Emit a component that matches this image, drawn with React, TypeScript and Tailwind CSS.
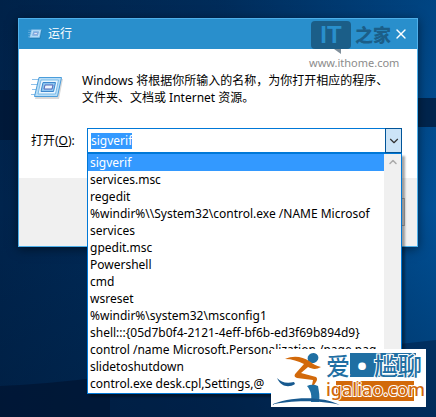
import React, { useEffect, useRef, useState } from "react";
import { ChevronDown, ChevronUp, X } from "lucide-react";

const HISTORY = [
  "sigverif",
  "services.msc",
  "regedit",
  "%windir%\\\\System32\\control.exe /NAME Microsof",
  "services",
  "gpedit.msc",
  "Powershell",
  "cmd",
  "wsreset",
  "%windir%\\system32\\msconfig1",
  "shell:::{05d7b0f4-2121-4eff-bf6b-ed3f69b894d9}",
  "control /name Microsoft.Personalization /page pag",
  "slidetoshutdown",
  "control.exe desk.cpl,Settings,@",
];

function RunIcon({ className }: { className: string }) {
  return (
    <svg viewBox="0 0 32 24" className={className} aria-hidden="true">
      <path d="M1 3.500h9M0 8.500h8M1 13.500h6M0 18.500h6" stroke="#8fc1ea" strokeWidth="1.2" />
      <path d="M8 3h24l-4 20H4z" fill="#000" opacity=".15" />
      <path d="M8 1.500h22.500l-4 19H3.500z" fill="#b9def7" stroke="#4a9ddb" />
      <path d="M10 4h17.500l-3 14H7z" fill="#e9f6ff" stroke="#7bbbe8" />
      <path d="M12 6.500h12.500l-2 9H10z" fill="#8cc6f0" stroke="#3d86cc" />
      <path d="M14 9h8l-1 4h-8z" fill="#eef6fd" stroke="#5566b8" />
    </svg>
  );
}

function Wallpaper() {
  return (
    <div className="absolute inset-0 bg-linear-to-r from-[#00244d] via-[#003062] to-[#005096]" aria-hidden="true">
      <div className="absolute inset-0 bg-linear-to-b from-[#001a38]/20 via-transparent to-[#001a38]/40" />
      <svg viewBox="0 0 436 417" preserveAspectRatio="none" className="absolute inset-0 size-full">
        <path d="M0 90h20v50H0z" fill="#00132c" opacity=".55" />
        <path d="M416 98h20v29h-20z" fill="#001b3d" opacity=".8" />
        <path d="M0 386q50-2 110-10v41H0z" fill="#001430" opacity=".7" />
        <path d="M110 376l326-36v77H110z" fill="#001b3d" opacity=".45" />
      </svg>
    </div>
  );
}

function SiteMark() {
  return (
    <div className="pointer-events-none absolute top-0.5 right-5 w-[88px]">
      <div className="flex items-center gap-1 pl-0.5 text-[#1b5e88]">
        <div className="relative flex h-7 w-10 items-center justify-center rounded-sm bg-[#1b5e88] font-['Liberation_Sans',sans-serif] text-2xl leading-none font-bold text-[#298fcc]">
          IT
          <svg viewBox="0 0 7 5" className="absolute top-full right-2.5 h-[5px] w-[7px]" aria-hidden="true">
            <path d="M0 0h7v5z" fill="#7f8f9b" />
          </svg>
        </div>
        <span className="text-lg leading-7 font-black">之家</span>
      </div>
      <p className="mt-1.5 text-[11px] leading-4 text-[#8c8c8c]">www.ithome.com</p>
    </div>
  );
}

function Sponsor() {
  return (
    <aside className="absolute right-2.5 bottom-2.5 z-20 flex h-[58px] w-[155px] bg-white">
      <svg viewBox="0 0 70 58" className="absolute bottom-0 left-0 h-[58px] w-[70px]" aria-hidden="true">
        <ellipse cx="42" cy="9" rx="5.500" ry="5" fill="#1f6fa3" transform="rotate(-25 42 9)" />
        <path d="M14 10c9-4 18-2 24 2 4 3 7 5 12 6-5 3-9 2-13 0l-7 6 15 4c2 2 1 4-2 8h-2l1-5-16-2c-3-1-3-3-1-5l8-9c-6-3-12-5-19-5z" fill="#d2690a" />
        <path d="M6 29c4 4 9 6 17 4l1 2c-6 4-14 3-18-6z" fill="#17598f" />
        <path d="M36 37c4-2 8-1 11 0 1 6 2 10 1 16h-8c1-7 0-11-4-16z" fill="#1f6fa3" />
        <path d="M0 56c16-8 50-10 69 0-20-5-50-5-69 0z" fill="#17598f" />
      </svg>
      <div className="relative ml-[55px] [paint-order:stroke_fill] [-webkit-text-stroke:2px_white]">
        <p className="mt-1 flex h-6 w-24 bg-[linear-gradient(to_right,transparent_24px,#1f6fa3_24px,#1f6fa3_90px,transparent_90px)] font-['Noto_Sans_CJK_SC',sans-serif] text-2xl leading-6 font-medium text-[#1f6fa3]">
          <span>爱</span>
          <span className="w-6 text-center text-white">·</span>
          <span>尴聊</span>
        </p>
        <p className="mt-1 h-5 bg-[linear-gradient(to_right,transparent_10px,#d2690a_10px,#d2690a_88px,transparent_88px)] text-lg leading-4 font-medium text-[#d2690a]">
          igaliao.com
        </p>
      </div>
    </aside>
  );
}

export default function App() {
  const [command, setCommand] = useState(HISTORY[0]);
  const [open, setOpen] = useState(true);
  const inputRef = useRef<HTMLInputElement>(null);

  useEffect(() => {
    inputRef.current?.focus();
    inputRef.current?.select();
  }, []);

  const handlePick = (item: string) => {
    setCommand(item);
    setOpen(false);
  };

  return (
    <main className="relative min-h-screen overflow-hidden p-[18px] font-['Noto_Sans','Noto_Sans_CJK_SC',sans-serif] text-xs text-black">
      <Wallpaper />

      <section className="relative border border-[#4fb0ea] bg-white shadow-[0_2px_10px_rgba(0,0,0,0.5)]">
        <header className="flex h-[30px] items-center gap-1.5 bg-[#298fcc] pr-2 pl-[9px] text-white">
          <RunIcon className="h-3 w-3.5" />
          <h1 className="flex-1">运行</h1>
          <button type="button" aria-label="关闭">
            <X className="size-4" strokeWidth={2} />
          </button>
        </header>
        <SiteMark />

        <div className="pt-[23px] pr-[15px] pb-[25px] pl-3">
          <div className="flex">
            <RunIcon className="mt-1 mr-[19px] h-6 w-8 shrink-0" />
            <p className="leading-[17px]">
              Windows 将根据你所输入的名称，为你打开相应的程序、
              <br />
              文件夹、文档或 Internet 资源。
            </p>
          </div>

          <div className="mt-[22px] flex items-center">
            <label htmlFor="command" className="w-14 shrink-0">
              打开(<u>O</u>):
            </label>
            <div className="relative flex h-[25px] min-w-0 flex-1 border border-[#0078d7] bg-white">
              <input
                id="command"
                ref={inputRef}
                role="combobox"
                aria-expanded={open}
                aria-controls="history"
                autoComplete="off"
                spellCheck={false}
                value={command}
                onChange={(e) => setCommand(e.target.value)}
                className="min-w-0 flex-1 px-[3px] leading-4 outline-none selection:bg-[#3399ff] selection:text-white"
              />
              <button
                type="button"
                aria-label="历史记录"
                onClick={() => setOpen(!open)}
                className="-my-px -mr-px flex w-[17px] items-center justify-center border border-[#005499] bg-[#cce4f7]"
              >
                <ChevronDown className="size-3.5 shrink-0 text-[#333]" />
              </button>

              {open && (
                <div className="absolute -inset-x-px top-full z-10 mt-px flex border border-[#0078d7] bg-white pb-px shadow-[3px_3px_2px_rgba(0,0,0,0.35)]">
                  <ul id="history" role="listbox" aria-label="历史记录" className="min-w-0 flex-1">
                    {HISTORY.map((item, i) => (
                      <li
                        key={item}
                        role="option"
                        aria-selected={i === 0}
                        onClick={() => handlePick(item)}
                        className="overflow-hidden pl-0.5 leading-[17px] whitespace-nowrap aria-selected:bg-[#3399ff] aria-selected:text-white"
                      >
                        {item}
                      </li>
                    ))}
                  </ul>
                  <div className="flex w-[17px] justify-center bg-[#f0f0f0] pt-0.5">
                    <ChevronUp className="size-3 text-[#aaa]" strokeWidth={3} />
                  </div>
                </div>
              )}
            </div>
          </div>
        </div>

        <footer className="flex h-[68px] items-center justify-end bg-[#f0f0f0] pr-3">
          <button type="button" aria-label="浏览" className="h-7 w-20 border border-[#adadad] bg-[#e1e1e1]" />
        </footer>
      </section>

      <Sponsor />
    </main>
  );
}
